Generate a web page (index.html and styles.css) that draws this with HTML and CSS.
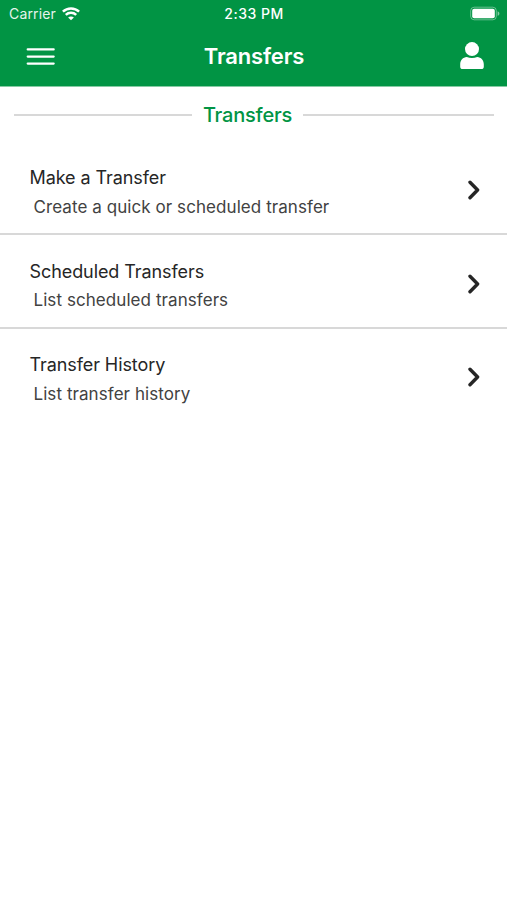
FILE: index.html
```html
<!DOCTYPE html>
<html lang="en">
<head>
<meta charset="utf-8">
<title>Transfers</title>
<link rel="stylesheet" href="styles.css">
</head>
<body>
<header class="top">
  <div class="status">
    <div class="carrier"><span class="carrier-name">Carrier</span>
      <svg class="wifi" width="18" height="14" viewBox="0 0 18 14" fill="none" stroke="#fff" stroke-width="2.5"><path d="M.9 4.6C5.4.3 12.6.3 17.1 4.6"/><path d="M3.8 7.8c2.9-2.8 7.5-2.8 10.4 0"/><path d="M9 13.3 6.1 10.5c1.6-1.5 4.2-1.5 5.8 0z" fill="#fff" stroke="none"/></svg>
    </div>
    <span class="clock">2:33 PM</span>
    <svg class="battery" width="30" height="14" viewBox="0 0 30 14"><rect x=".7" y=".2" width="25.6" height="12.6" rx="3.5" fill="none" stroke="#fff" stroke-opacity=".4"/><rect x="2.2" y="1.8" width="22.6" height="9.4" rx="2" fill="#fff"/><path d="M27.6 4.2c2.4.8 2.4 3.8 0 4.6z" fill="#fff" fill-opacity=".5"/></svg>
  </div>
  <nav class="bar">
    <svg class="menu" width="30" height="20" viewBox="0 0 30 20" stroke="#fff" stroke-width="2.2" stroke-linecap="round"><path d="M1.7 2.4h26M1.7 9.6h26M1.7 16.6h26"/></svg>
    <h1 class="title">Transfers</h1>
    <svg class="user" width="24" height="28" viewBox="0 0 24 28" fill="#fff"><circle cx="12" cy="7.1" r="7"/><path d="M6.8 14.9c3.2 1.5 7.2 1.5 10.4 0 3.9.2 6.6 3.4 6.6 7.3v2.5c0 1.5-.9 2.4-2.4 2.4H2.6c-1.5 0-2.4-.9-2.4-2.4v-2.5c0-3.9 2.7-7.1 6.6-7.3z"/></svg>
  </nav>
</header>
<main>
  <h2 class="section"><span class="section-name">Transfers</span></h2>
  <ul class="list">
    <li class="row"><div class="copy"><div class="name">Make a Transfer</div><div class="desc">Create a quick or scheduled transfer</div></div><svg class="chevron" width="14" height="20" viewBox="0 0 14 20"><path d="m3 2.3 7.6 7.7L3 17.7"/></svg></li>
    <li class="row"><div class="copy"><div class="name">Scheduled Transfers</div><div class="desc">List scheduled transfers</div></div><svg class="chevron" width="14" height="20" viewBox="0 0 14 20"><path d="m3 2.3 7.6 7.7L3 17.7"/></svg></li>
    <li class="row"><div class="copy"><div class="name">Transfer History</div><div class="desc">List transfer history</div></div><svg class="chevron" width="14" height="20" viewBox="0 0 14 20"><path d="m3 2.3 7.6 7.7L3 17.7"/></svg></li>
  </ul>
</main>
</body>
</html>
```
FILE: styles.css
```css
* { box-sizing: border-box; }
body { margin: 0; background: #fff; color: #262626; font-family: Inter, "Liberation Sans", sans-serif; }
svg { display: block; flex: none; }
.top { height: 87px; background: #019444; border-bottom: 1px solid #86cba4; color: #fff; }
.status { display: grid; grid-template-columns: 1fr auto 1fr; align-items: center; height: 27px; padding: 0 7px 0 9px; }
.carrier { display: flex; align-items: center; gap: 6px; font-size: 14px; line-height: 18px; letter-spacing: .15px; }
.carrier-name { opacity: .9; }
.clock { margin-left: -1px; font-size: 14px; font-weight: 500; line-height: 18px; letter-spacing: .5px; }
.battery { justify-self: end; overflow: visible; }
.bar { display: grid; grid-template-columns: 1fr auto 1fr; align-items: center; height: 58px; padding: 0 23px 0 26px; }
.menu { margin-top: 2px; }
.title { margin: 0 2px 0 0; font-size: 22px; font-weight: 600; line-height: 28px; letter-spacing: -.15px; }
.user { justify-self: end; }
.section { display: flex; align-items: center; gap: 11px; margin: 0; padding: 14px 13px 0 14px; height: 42px; color: #019444; font-size: 20px; font-weight: 500; line-height: 28px; letter-spacing: -.2px; }
.section::before, .section::after { content: ""; height: 2px; background: #d8d8d8; }
.section::before { flex: 178; }
.section::after { flex: 191; }
.list { list-style: none; margin: 0; padding: 12.4px 0 0; }
.row { display: flex; align-items: center; justify-content: space-between; height: 93.6px; padding: 10px 26px 0 29.5px; border-bottom: 2px solid #d8d8d8; }
.row:last-child { border-bottom-color: transparent; }
.name { font-size: 18px; line-height: 29px; letter-spacing: -.08px; }
.desc { margin-bottom: -.5px; padding: .5px 0 0 4px; color: #424242; font-size: 17px; line-height: 29px; letter-spacing: .07px; }
.chevron { margin-top: -4px; fill: none; stroke: #262626; stroke-width: 3.4; stroke-linecap: round; stroke-linejoin: round; }
```
